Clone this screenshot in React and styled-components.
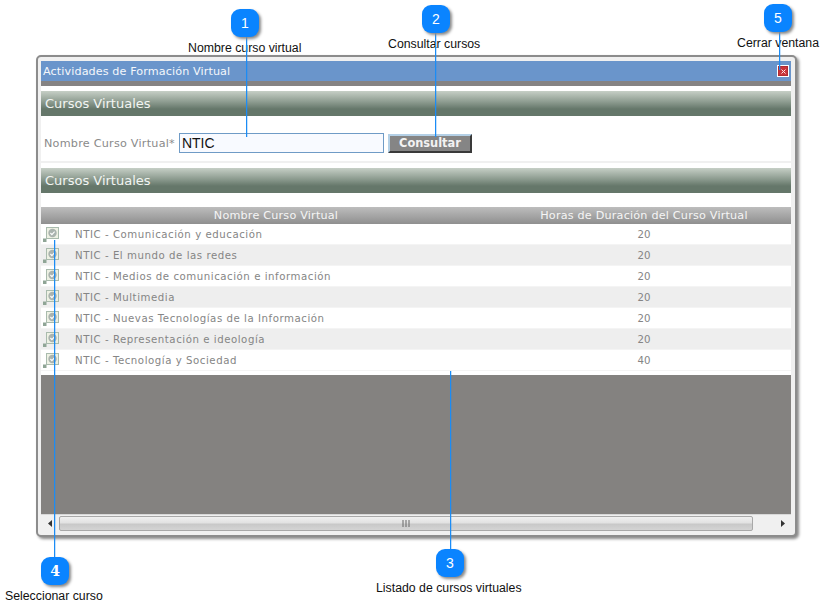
import React from "react";
import styled, { createGlobalStyle } from "styled-components";

const GlobalStyle = createGlobalStyle`
  html, body { margin: 0; padding: 0; background: #fff; }
  body { font-family: "DejaVu Sans", Verdana, sans-serif; }
`;

const Page = styled.div`
  position: relative;
  width: 822px;
  height: 606px;
  padding: 55px 0 0 36px;
  box-sizing: border-box;
  overflow: hidden;
`;

const Win = styled.div`
  width: 761px;
  height: 482px;
  box-sizing: border-box;
  border: 2px solid #8c8c8c;
  border-radius: 5px;
  background: #f0f0f0;
  padding: 4px 4px 4px 3px;
  box-shadow: 2px 2px 3px #8a8a8a;
  display: flex;
  flex-direction: column;
`;

const TitleBar = styled.div`
  height: 20px;
  flex: none;
  background: #6a95cb;
  border-bottom: 5px solid #858383;
  display: flex;
  align-items: center;
  justify-content: space-between;
  padding: 0 2px 0 2px;
  color: #f4f7fb;
  font-size: 11.2px;
  letter-spacing: 0.1px;
`;

const CloseBtn = styled.div`
  width: 10px;
  height: 10px;
  border: 1px solid #fff;
  background: #c9343b;
  display: flex;
  align-items: center;
  justify-content: center;
  box-shadow: inset 0 0 0 1px #b02c33;
`;

const Body = styled.div`
  flex: 1;
  background: #fff;
  display: flex;
  flex-direction: column;
  padding-top: 5px;
  min-height: 0;
`;

const Heading = styled.div`
  height: 25px;
  flex: none;
  box-sizing: border-box;
  padding-left: 4px;
  display: flex;
  align-items: center;
  color: #f2f5f2;
  font-size: 13px;
  background: linear-gradient(#c6cfc6 0, #8b9a8e 45%, #65776a 72%, #65776a 100%);
`;

const FormRow = styled.div`
  height: 47px;
  flex: none;
  box-sizing: border-box;
  border-bottom: 2px solid #f0f0f0;
  margin-bottom: 5px;
  padding: 9px 0 0 3px;
  display: flex;
  align-items: center;
  gap: 4px;
`;

const FieldLabel = styled.label`
  color: #8a8a8a;
  font-size: 11.2px;
  letter-spacing: 0.24px;
`;

const TextField = styled.input`
  width: 205px;
  height: 20px;
  box-sizing: border-box;
  border: 1px solid #6f9bc6;
  background: #f8faff;
  padding: 0 2px;
  font-family: "Liberation Sans", Arial, sans-serif;
  font-size: 14px;
  color: #111;
  outline: none;
`;

const SubmitBtn = styled.button`
  width: 84px;
  height: 19px;
  box-sizing: border-box;
  padding: 0;
  background: #858585;
  color: #f2f2f2;
  font-family: "DejaVu Sans", Verdana, sans-serif;
  font-size: 11.4px;
  font-weight: bold;
  border-style: solid;
  border-width: 2px;
  border-color: #b4d0e6 #3a3a3a #3a3a3a #b4d0e6;
`;

const Table = styled.div`
  margin-top: 14px;
  padding-bottom: 4px;
  flex: none;
`;

const HeadRow = styled.div`
  height: 17px;
  display: grid;
  grid-template-columns: 470px 1fr;
  align-items: center;
  background: linear-gradient(#bdbdbd, #8f8f8f);
  color: #f5f5f5;
  font-size: 11.2px;
  letter-spacing: 0.2px;
  text-align: center;
  padding-right: 14px;
`;

const Row = styled.div`
  height: 21px;
  box-sizing: border-box;
  display: grid;
  grid-template-columns: 34px 436px 1fr;
  align-items: center;
  background: ${(p) => (p.$alt ? "#eeeeee" : "#ffffff")};
  border-bottom: 1px solid #f4f4f4;
  color: #858585;
  font-size: 10.2px;
  padding-right: 14px;
`;

const Pick = styled.div`
  position: relative;
  height: 21px;
`;

const Hours = styled.div`
  text-align: center;
`;

const CourseName = styled.div`
  letter-spacing: 0.54px;
  white-space: nowrap;
`;

const Empty = styled.div`
  flex: 1;
  background: #848280;
`;

const ScrollBar = styled.div`
  height: 17px;
  flex: none;
  background: #f0f0f0;
  display: flex;
  align-items: center;
  box-sizing: border-box;
  border-top: 1px solid #d8d8d8;
`;

const Arrow = styled.div`
  width: 18px;
  flex: none;
  display: flex;
  justify-content: center;
`;

const Thumb = styled.div`
  width: 694px;
  height: 15px;
  box-sizing: border-box;
  border: 1px solid #a8a8a8;
  border-radius: 2px;
  background: linear-gradient(#f0f0f0, #e2e2e2 45%, #c8c8c8 55%, #d4d4d4);
  display: flex;
  align-items: center;
  justify-content: center;
  margin-right: 20px;
`;

const Callout = styled.div`
  position: absolute;
  width: 28px;
  height: 28px;
  border-radius: 9px;
  background: #0a84ff;
  box-shadow: 2px 2px 3px #8a8a8a;
  color: #fff;
  font-family: ${(p) => (p.$serif ? '"DejaVu Serif", serif' : '"Liberation Sans", Arial, sans-serif')};
  font-size: 14px;
  font-weight: ${(p) => (p.$serif ? "bold" : "normal")};
  display: flex;
  align-items: center;
  justify-content: center;
  z-index: 3;
`;

const Leader = styled.div`
  position: absolute;
  width: 1px;
  background: #1b8cf5;
  box-shadow: 1px 0 0 rgba(27, 140, 245, 0.25);
  z-index: 2;
`;

const Note = styled.div`
  position: absolute;
  font-family: "Liberation Sans", Arial, sans-serif;
  font-size: 12.3px;
  line-height: 14px;
  color: #111;
  white-space: nowrap;
  z-index: 1;
`;

const rows = [
  ["NTIC - Comunicación y educación", 20],
  ["NTIC - El mundo de las redes", 20],
  ["NTIC - Medios de comunicación e información", 20],
  ["NTIC - Multimedia", 20],
  ["NTIC - Nuevas Tecnologías de la Información", 20],
  ["NTIC - Representación e ideología", 20],
  ["NTIC - Tecnología y Sociedad", 40],
];

const callouts = [
  { n: 1, x: 231, y: 9, lineX: 246, lineTop: 37, lineH: 100, note: "Nombre curso virtual", noteX: 188, noteY: 41 },
  { n: 2, x: 422, y: 5, lineX: 435, lineTop: 33, lineH: 104, note: "Consultar cursos", noteX: 388, noteY: 37 },
  { n: 3, x: 436, y: 549, lineX: 450, lineTop: 371, lineH: 178, note: "Listado de cursos virtuales", noteX: 376, noteY: 581 },
  { n: 4, x: 41, y: 557, lineX: 54, lineTop: 240, lineH: 317, note: "Seleccionar curso", noteX: 5, noteY: 589, serif: true },
  { n: 5, x: 764, y: 4, lineX: 779, lineTop: 32, lineH: 38, note: "Cerrar ventana", noteX: 737, noteY: 36 },
];

const CheckIcon = () => (
  <svg width="17" height="19" viewBox="0 0 17 19" style={{ position: "absolute", left: 2, top: 2 }}>
    <rect x="0" y="12.5" width="3.5" height="3.5" fill="#8fa596" />
    <rect x="3.5" y="1.5" width="12" height="11" fill="#eef1e4" stroke="#a9bbad" />
    <circle cx="9.5" cy="7" r="4.2" fill="#aab3ae" />
    <path d="M7.4 7 l1.5 1.6 l2.7 -3" fill="none" stroke="#fff" strokeWidth="1.1" />
  </svg>
);

const App = () => {
  return (
    <Page>
      <GlobalStyle />
      <Win>
        <TitleBar>
          <span>Actividades de Formación Virtual</span>
          <CloseBtn>
            <svg width="5" height="5" viewBox="0 0 5 5">
              <path d="M0.5 0.5 L4.5 4.5 M4.5 0.5 L0.5 4.5" stroke="#fbe4e4" strokeWidth="1" />
            </svg>
          </CloseBtn>
        </TitleBar>
        <Body>
          <Heading>Cursos Virtuales</Heading>
          <FormRow>
            <FieldLabel>Nombre Curso Virtual*</FieldLabel>
            <TextField defaultValue="NTIC" />
            <SubmitBtn>Consultar</SubmitBtn>
          </FormRow>
          <Heading>Cursos Virtuales</Heading>
          <Table>
            <HeadRow>
              <div>Nombre Curso Virtual</div>
              <div>Horas de Duración del Curso Virtual</div>
            </HeadRow>
            {rows.map(([name, hours], i) => (
              <Row key={name} $alt={i % 2 === 1}>
                <Pick>
                  <CheckIcon />
                </Pick>
                <CourseName>{name}</CourseName>
                <Hours>{hours}</Hours>
              </Row>
            ))}
          </Table>
          <Empty />
          <ScrollBar>
            <Arrow>
              <svg width="5" height="7" viewBox="0 0 5 7"><path d="M4 0 L0 3.5 L4 7 Z" fill="#333" /></svg>
            </Arrow>
            <Thumb>
              <svg width="8" height="7" viewBox="0 0 8 7">
                <path d="M1 0 V7 M4 0 V7 M7 0 V7" stroke="#666" strokeWidth="1" />
              </svg>
            </Thumb>
            <Arrow>
              <svg width="5" height="7" viewBox="0 0 5 7"><path d="M1 0 L5 3.5 L1 7 Z" fill="#333" /></svg>
            </Arrow>
          </ScrollBar>
        </Body>
      </Win>
      {callouts.map((c) => (
        <React.Fragment key={c.n}>
          <Note style={{ left: c.noteX, top: c.noteY }}>{c.note}</Note>
          <Leader style={{ left: c.lineX, top: c.lineTop, height: c.lineH }} />
          <Callout $serif={c.serif} style={{ left: c.x, top: c.y }}>{c.n}</Callout>
        </React.Fragment>
      ))}
    </Page>
  );
};

export default App;
